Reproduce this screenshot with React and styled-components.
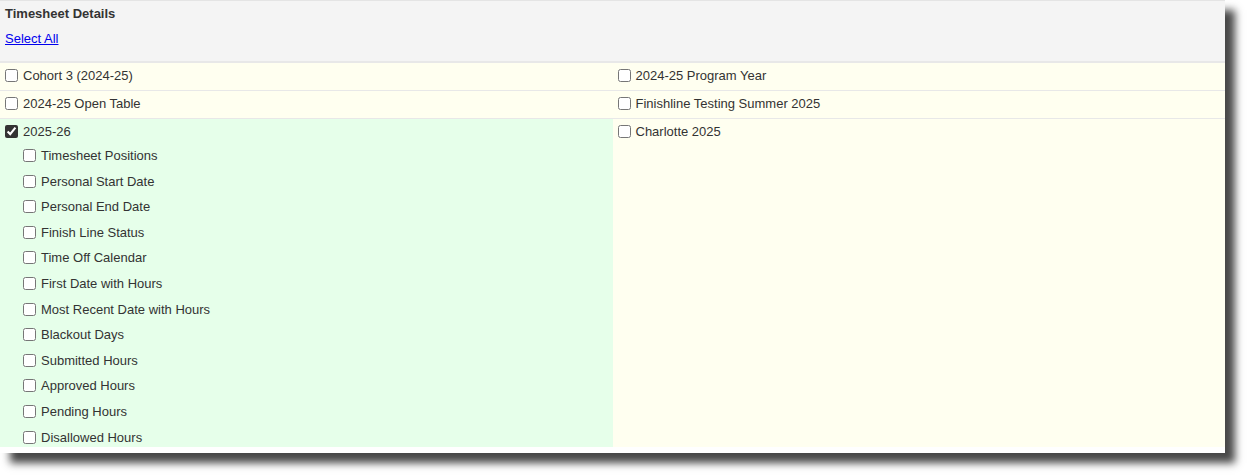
import React from 'react';
import styled, { createGlobalStyle } from 'styled-components';

const GlobalStyle = createGlobalStyle`
    body {
        margin: 0;
        background: #ffffff;
        font-family: "Liberation Sans", Arial, sans-serif;
    }
`

const groups = [
    { label: 'Cohort 3 (2024-25)' },
    { label: '2024-25 Program Year' },
    { label: '2024-25 Open Table' },
    { label: 'Finishline Testing Summer 2025' },
    {
        label: '2025-26',
        checked: true,
        fields: [
            'Timesheet Positions',
            'Personal Start Date',
            'Personal End Date',
            'Finish Line Status',
            'Time Off Calendar',
            'First Date with Hours',
            'Most Recent Date with Hours',
            'Blackout Days',
            'Submitted Hours',
            'Approved Hours',
            'Pending Hours',
            'Disallowed Hours',
        ],
    },
    { label: 'Charlotte 2025' },
]

const TimesheetDetails = () => {
    return (
        <Page>
            <GlobalStyle />
            <Panel>
                <Header>
                    <Title>Timesheet Details</Title>
                    <SelectAll href="#">Select All</SelectAll>
                </Header>
                <Grid>
                    {groups.map((g, i) => (
                        <Cell key={g.label} $checked={g.checked} $last={i >= groups.length - 2}>
                            <Item>
                                <Check type="checkbox" defaultChecked={!!g.checked} />
                                {g.label}
                            </Item>
                            {g.fields && (
                                <SubList>
                                    {g.fields.map((f) => (
                                        <SubItem key={f}>
                                            <Check type="checkbox" />
                                            {f}
                                        </SubItem>
                                    ))}
                                </SubList>
                            )}
                        </Cell>
                    ))}
                </Grid>
            </Panel>
        </Page>
    );
}

const Page = styled.div`
    padding-bottom: 23px;
`

const Panel = styled.div`
    width: 1225px;
    background: #ffffff;
    padding-bottom: 6px;
    box-shadow: 10px 10px 8px rgba(0, 0, 0, 0.72);
    color: #333333;
    font-size: 13px;
`

const Header = styled.div`
    display: flex;
    flex-direction: column;
    align-items: flex-start;
    box-sizing: border-box;
    height: 63px;
    background: #f4f4f4;
    border-top: 1px solid #e4e4e4;
    border-bottom: 2px solid #e8e8e8;
    padding: 5px 5px 0;
`

const Title = styled.div`
    font-weight: bold;
    line-height: 15px;
`

const SelectAll = styled.a`
    margin-top: 10px;
    line-height: 15px;
    color: #0000ee;
    text-decoration: underline;
`

const Grid = styled.div`
    display: grid;
    grid-template-columns: 1fr 1fr;
`

const Cell = styled.div`
    background: ${(p) => (p.$checked ? '#e6ffea' : '#fffff0')};
    border-bottom: ${(p) => (p.$last ? '0' : '1px solid #e8e8e8')};
    padding: 2px 5px ${(p) => (p.$last ? '0' : '5px')};
`

const Item = styled.label`
    display: flex;
    align-items: center;
    height: 20px;
    line-height: 15px;
`

const SubList = styled.div`
    display: flex;
    flex-direction: column;
    gap: 6.6px;
    margin-top: 5px;
    padding-left: 18px;
`

const SubItem = styled.label`
    display: flex;
    align-items: center;
    height: 19px;
    line-height: 15px;
`

const Check = styled.input`
    width: 13px;
    height: 13px;
    margin: 0 5px 0 0;
    accent-color: #333333;
`

export default TimesheetDetails;
